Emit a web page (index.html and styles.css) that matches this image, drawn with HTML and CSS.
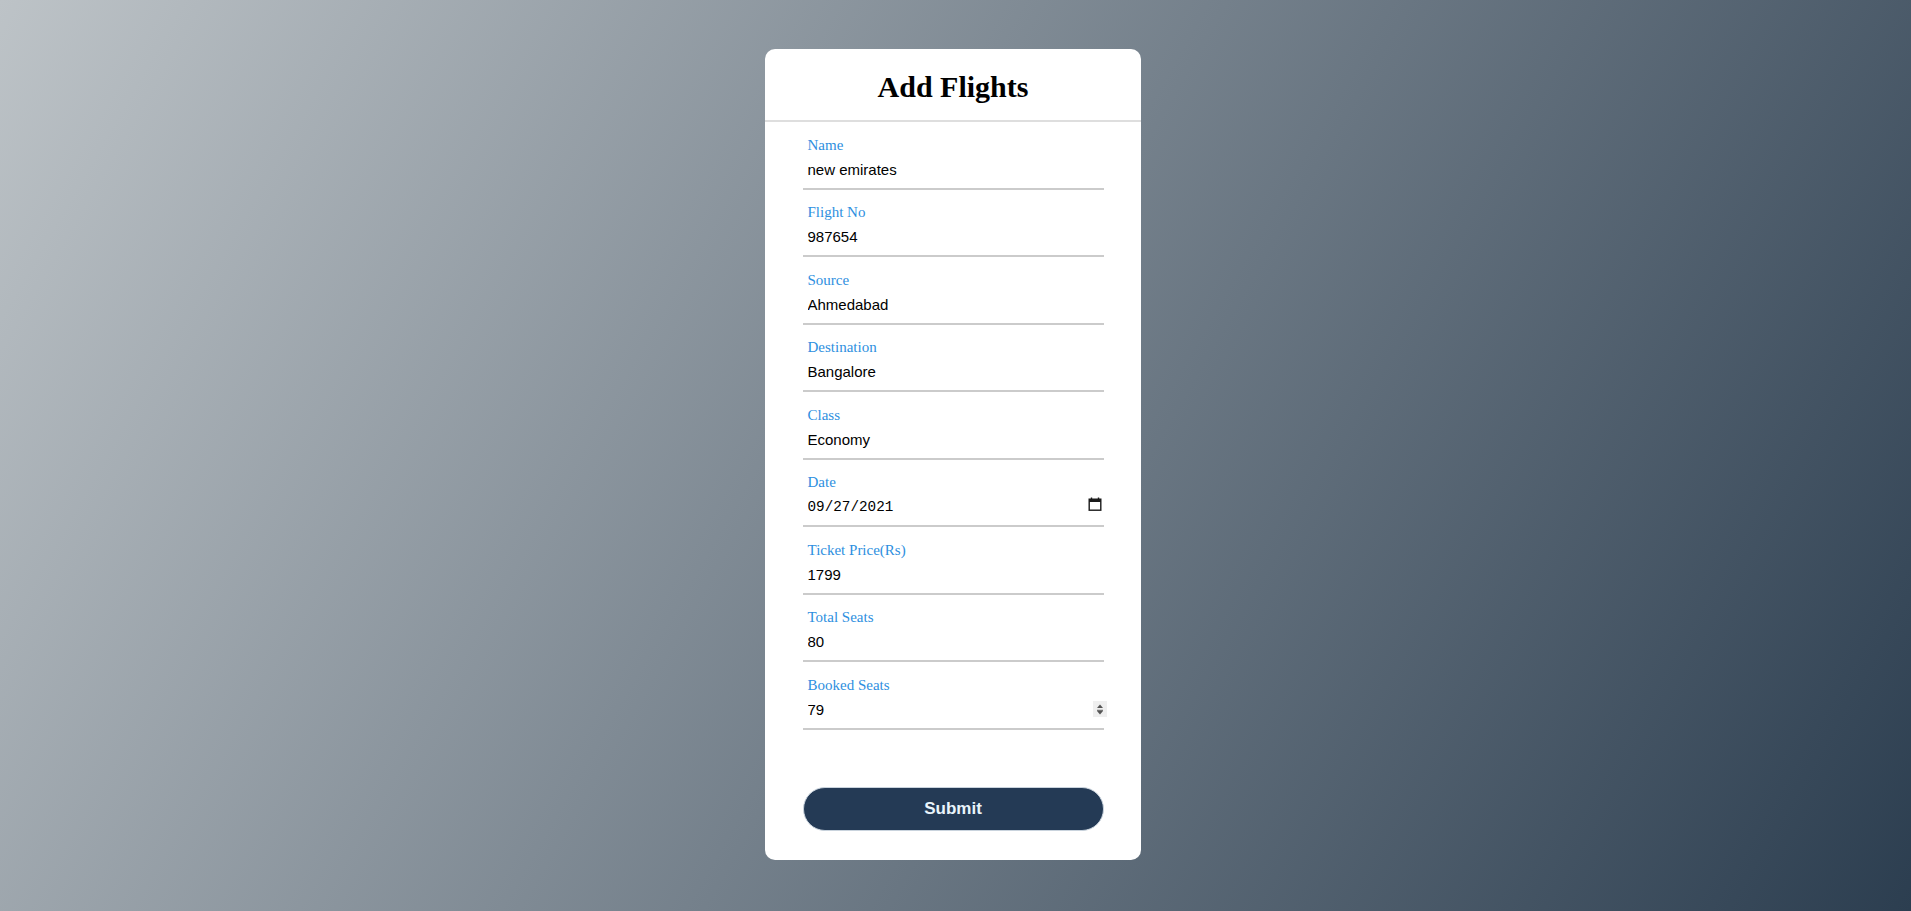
FILE: index.html
```html
<!DOCTYPE html>
<html lang="en">
<head>
<meta charset="utf-8">
<title>Add Flights</title>
<link rel="stylesheet" href="styles.css">
</head>
<body>
<div class="page">
  <div class="card">
    <h1 class="title">Add Flights</h1>
    <form class="form">
      <div class="field">
        <label class="label">Name</label>
        <div class="row"><input class="input" type="text" value="new emirates"></div>
      </div>
      <div class="field">
        <label class="label">Flight No</label>
        <div class="row"><input class="input" type="text" value="987654"></div>
      </div>
      <div class="field">
        <label class="label">Source</label>
        <div class="row"><input class="input" type="text" value="Ahmedabad"></div>
      </div>
      <div class="field">
        <label class="label">Destination</label>
        <div class="row"><input class="input" type="text" value="Bangalore"></div>
      </div>
      <div class="field">
        <label class="label">Class</label>
        <div class="row"><input class="input" type="text" value="Economy"></div>
      </div>
      <div class="field">
        <label class="label">Date</label>
        <div class="row">
          <input class="input input-mono" type="text" value="09/27/2021">
          <svg class="cal-icon" width="14" height="14" viewBox="0 0 14 14" aria-hidden="true">
            <path d="M3.5 0.5v2.5M10.5 0.5v2.5" stroke="#1a1a1a" stroke-width="1.4" fill="none"/>
            <rect x="1.2" y="2.2" width="11.6" height="11" fill="none" stroke="#1a1a1a" stroke-width="1.4"/>
            <rect x="1.2" y="2.2" width="11.6" height="2.8" fill="#1a1a1a"/>
          </svg>
        </div>
      </div>
      <div class="field">
        <label class="label">Ticket Price(Rs)</label>
        <div class="row"><input class="input" type="text" value="1799"></div>
      </div>
      <div class="field">
        <label class="label">Total Seats</label>
        <div class="row"><input class="input" type="text" value="80"></div>
      </div>
      <div class="field">
        <label class="label">Booked Seats</label>
        <div class="row">
          <input class="input" type="text" value="79">
          <span class="spinner" aria-hidden="true">
            <svg width="14" height="16" viewBox="0 0 14 16">
              <path d="M7 3.5L10 7H4z" fill="#555"/>
              <path d="M4 9.3h6" stroke="#555" stroke-width="1"/>
              <path d="M4 10L10 10L7 13.5z" fill="#555"/>
            </svg>
          </span>
        </div>
      </div>
      <button class="submit" type="button">Submit</button>
    </form>
  </div>
</div>
</body>
</html>
```

FILE: styles.css
```css
html, body {
  margin: 0;
  padding: 0;
  height: 100%;
}

body {
  background: linear-gradient(120deg, #bdc3c7, #2c3e50);
  min-height: 100vh;
}

.page {
  height: 100vh;
  box-sizing: border-box;
  padding-right: 5px;
  padding-bottom: 2px;
  display: flex;
  align-items: center;
  justify-content: center;
}

.card {
  width: 376px;
  background: #ffffff;
  border-radius: 10px;
}

.title {
  margin: 0;
  padding: 20px 0 15px;
  font-family: "Liberation Serif", "Times New Roman", serif;
  font-weight: bold;
  font-size: 30px;
  line-height: 36px;
  text-align: center;
  color: #000;
  border-bottom: 2px solid #dedede;
}

.form {
  padding: 0 37.5px 29px;
  display: flex;
  flex-direction: column;
}

.field {
  padding-top: 13.5px;
}

.label {
  display: block;
  padding-left: 5px;
  font-family: "Liberation Serif", "Times New Roman", serif;
  font-size: 15px;
  line-height: 18px;
  color: #2e8fe0;
}

.row {
  display: flex;
  align-items: flex-start;
  height: 34px;
  border-bottom: 2px solid #cbcbcb;
}

.input {
  flex: 1;
  min-width: 0;
  height: 34px;
  box-sizing: border-box;
  margin: 0;
  padding: 7px 5px 10px;
  border: none;
  outline: none;
  background: none;
  font-family: "Liberation Sans", Arial, sans-serif;
  font-size: 15px;
  color: #000;
}

.input-mono {
  font-family: "Liberation Mono", "Courier New", monospace;
  font-size: 14.3px;
}

.cal-icon {
  flex: none;
  margin-top: 6px;
  margin-right: 2px;
}

.spinner {
  flex: none;
  display: flex;
  margin-top: 7px;
  margin-right: -3px;
  width: 14px;
  height: 16px;
  background: #efefef;
}

.submit {
  margin-top: 57.5px;
  width: 100%;
  height: 44px;
  border: 1px solid #c9d3dd;
  border-radius: 22px;
  background: #243a55;
  color: #e9f4fb;
  font-family: "Liberation Sans", Arial, sans-serif;
  font-weight: bold;
  font-size: 17px;
  cursor: pointer;
}
```
